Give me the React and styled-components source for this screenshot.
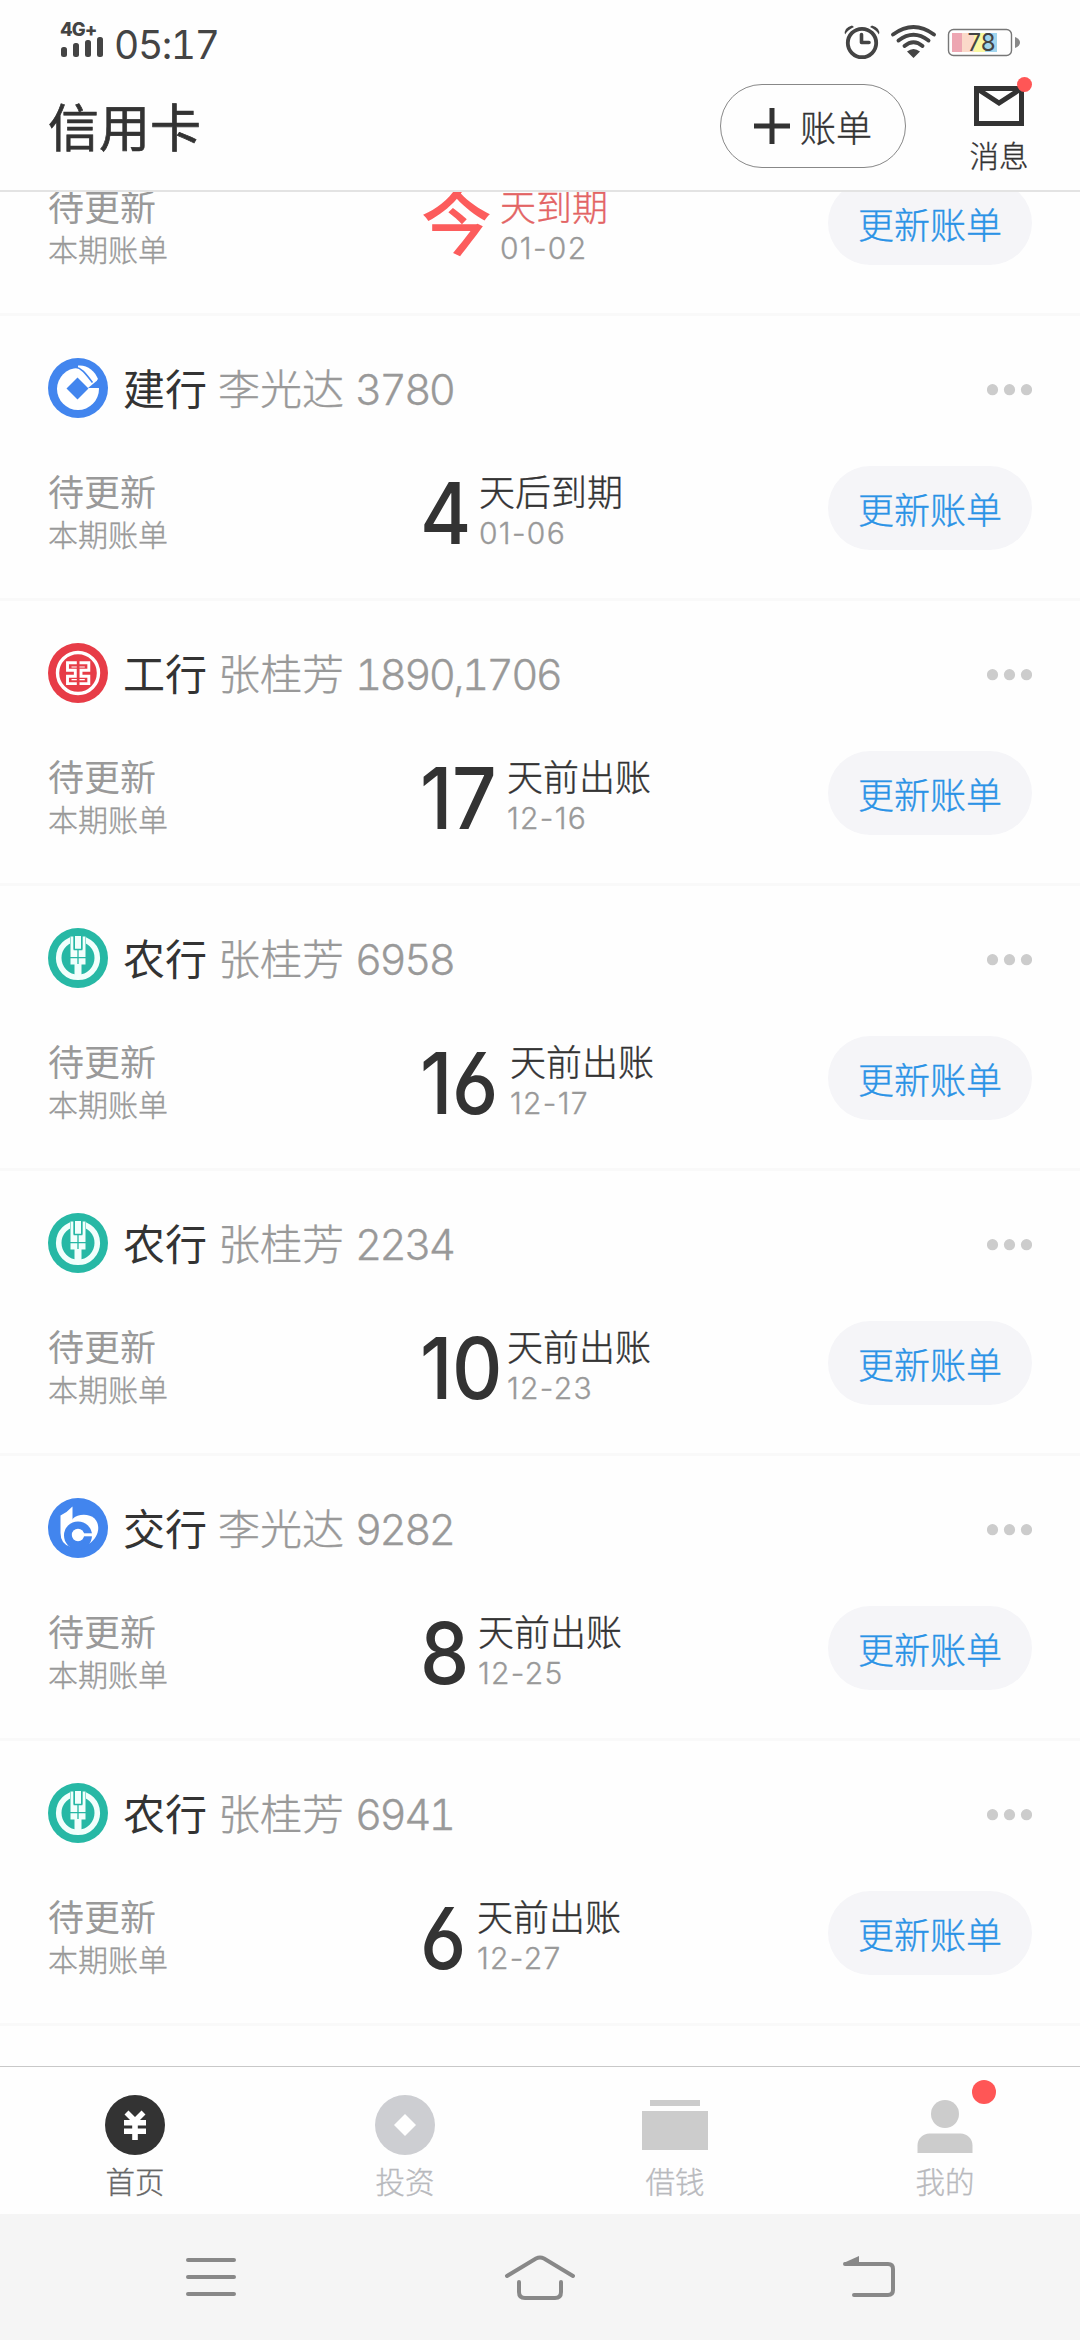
import React from 'react';
import styled, { createGlobalStyle } from 'styled-components';

const GlobalStyle = createGlobalStyle`
    * {
        box-sizing: border-box;
    }

    body {
        margin: 0;
        background: #fefefe;
        font-family: Inter, "Noto Sans CJK SC", sans-serif;
        font-weight: 300;
        color: #333;
        -webkit-text-stroke: 0.35px;
    }

    svg {
        display: block;
        flex: none;
    }
`;

const Phone = styled.div`
    width: 1080px;
    height: 2340px;
    display: flex;
    flex-direction: column;
    overflow: hidden;
    background: #fefefe;
`;

const StatusBar = styled.div`
    height: 84px;
    flex: none;
    padding: 0 60px;
    display: flex;
    align-items: flex-start;
    justify-content: space-between;
    color: #444;
    -webkit-text-stroke: 0;
`;

const StatusGroup = styled.div`
    display: flex;
    align-items: flex-start;
`;

const Signal = styled.div`
    width: 54px;
    padding-top: 17px;
`;

const Network = styled.div`
    height: 24px;
    margin-bottom: -4px;
    line-height: 24px;
    font-size: 18.5px;
    font-weight: 800;
    letter-spacing: -1px;
    white-space: nowrap;
`;

const Time = styled.div`
    margin-top: 20px;
    line-height: 50px;
    font-size: 39px;
    font-weight: 400;
    font-feature-settings: "tnum";
    letter-spacing: -1.4px;
`;

const Header = styled.header`
    height: 108px;
    flex: none;
    padding: 0 48px;
    display: flex;
    align-items: flex-start;
    border-bottom: 2px solid #e3e3e3;
`;

const Title = styled.h1`
    margin: 3px 0 0;
    flex: 1;
    font-size: 51px;
    font-weight: 400;
    line-height: 84px;
    -webkit-text-stroke: 0.7px;
`;

const AddButton = styled.button`
    width: 186px;
    height: 84px;
    padding: 0 0 0 33px;
    display: flex;
    align-items: center;
    gap: 10px;
    border: 1px solid #888;
    border-radius: 42px;
    background: none;
    color: #333;
    font: inherit;
    font-size: 36px;
`;

const Messages = styled.div`
    position: relative;
    width: 66px;
    margin-left: 60px;
    display: flex;
    flex-direction: column;
    align-items: center;
    font-size: 29.5px;
    line-height: 44px;

    svg {
        margin: 2px 0 8px;
    }
`;

const Badge = styled.i`
    position: absolute;
    top: ${props => props.$top}px;
    left: ${props => props.$left}px;
    width: ${props => props.$size}px;
    height: ${props => props.$size}px;
    border-radius: 50%;
    background: #ff5656;
`;

/* scrolled to the end, so the first card is cut by the header */
const CardList = styled.main`
    flex: 1;
    min-height: 0;
    padding-bottom: 40px;
    display: flex;
    flex-direction: column;
    justify-content: flex-end;
    overflow: hidden;
`;

const Card = styled.section`
    height: 285px;
    flex: none;
    padding: 42px 48px 0;
    border-bottom: 3px solid #f9f9f9;
`;

const CardTop = styled.div`
    height: 60px;
    display: flex;
    align-items: center;
`;

const Bank = styled.span`
    margin: 4px 0 0 15px;
    font-size: 42px;
    font-weight: 400;
    line-height: 60px;
    -webkit-text-stroke: 0;
`;

const Owner = styled.span`
    margin: 4px 0 0 11px;
    flex: 1;
    color: #999;
    font-size: 42px;
    line-height: 60px;
`;

const CardNo = styled.span`
    margin-left: 11px;
    font-feature-settings: "tnum";
    letter-spacing: -2.6px;
`;

const CardBody = styled.div`
    height: 84px;
    margin-top: 48px;
    display: flex;
`;

const Status = styled.div`
    width: 375px;
    color: #999;
`;

const StatusText = styled.div`
    margin-top: 3px;
    font-size: 36px;
    font-weight: ${props => (props.$bold ? 400 : 300)};
    line-height: 48px;
    -webkit-text-stroke: ${props => (props.$bold ? 0 : 0.35)}px;
`;

const StatusNote = styled.div`
    margin-top: -1px;
    font-size: 30px;
    line-height: 38px;
`;

const Days = styled.div`
    width: ${props => props.$width}px;
    color: ${props => (props.$due ? '#fc5c5c' : '#333')};
    font-size: ${props => (props.$due ? 71 : 85)}px;
    font-weight: 500;
    line-height: ${props => (props.$due ? 84 : 95)}px;
    font-feature-settings: "cv03";
    white-space: nowrap;
    -webkit-text-stroke: 0;

    span {
        display: inline-block;
        margin-left: ${props => (props.$due ? -2 : -3)}px;
        letter-spacing: -0.5px;
        transform: scaleX(${props => (props.$due ? 1 : 0.92)});
        transform-origin: left;
    }
`;

const When = styled.div`
    flex: 1;
    color: ${props => (props.$due ? '#e36464' : '#333')};
`;

const DateText = styled.div`
    color: #999;
    font-size: 30px;
    line-height: 32px;
    letter-spacing: 1.3px;
`;

const UpdateButton = styled.button`
    width: 204px;
    height: 84px;
    padding: 0 0 1px;
    border: 0;
    border-radius: 42px;
    background: #f5f5f8;
    color: #2b93e6;
    font: inherit;
    font-size: 36px;
`;

const TabBar = styled.nav`
    height: 148px;
    flex: none;
    display: flex;
    border-top: 1px solid #c8c8c8;
`;

const Tab = styled.div`
    position: relative;
    flex: 1;
    padding-top: 24px;
    display: flex;
    flex-direction: column;
    align-items: center;
    color: ${props => (props.$active ? '#666' : '#b8b9bd')};
    font-size: 29.5px;
    line-height: 46px;
`;

const SystemNav = styled.div`
    height: 126px;
    flex: none;
    padding: 0 184px;
    display: flex;
    align-items: center;
    justify-content: space-between;
    background: #f5f5f5;
`;

const icons = {
    home: (
        <svg width="68" height="68" viewBox="0 0 68 68">
            <circle cx="34" cy="34" r="30" fill="#333" />
            <path d="M25.5 21.5L34 30L42.5 21.5M23 31.8h22M23 40.3h22M34 28v21" fill="none" stroke="#fff" strokeWidth="5.6" />
        </svg>
    ),
    invest: (
        <svg width="68" height="68" viewBox="0 0 68 68">
            <circle cx="34" cy="34" r="30" fill="#cdced2" />
            <path d="M34 23l11 11l-11 11l-11-11z" fill="#fff" />
        </svg>
    ),
    loan: (
        <svg width="68" height="68" viewBox="0 0 68 68" fill="#ccc">
            <path d="M9 9h50v6H9zM1 20h66v39H1z" />
        </svg>
    ),
    mine: (
        <svg width="68" height="68" viewBox="0 0 68 68" fill="#ccc">
            <circle cx="34" cy="23" r="14" />
            <path d="M6.5 62V54.5a12 12 0 0 1 12-12h31a12 12 0 0 1 12 12V62z" />
        </svg>
    )
};

const logos = {
    ccb: (
        <svg width="60" height="60" viewBox="0 0 60 60">
            <circle cx="30" cy="30" r="30" fill="#4285ee" />
            <circle cx="30" cy="31" r="21" fill="#fff" />
            <path d="M30 7.5C39 6.5 47 13 50 21L43 29.5L30 10z" fill="#fff" />
            <path d="M27 9C34 10 38 16 44.5 24.5" fill="none" stroke="#4285ee" strokeWidth="1.6" />
            <path d="M40 30L51 21L60 30H50z" fill="#4285ee" />
            <path d="M29.5 19.5l11 11l-11 11l-11-11z" fill="#4285ee" />
        </svg>
    ),
    icbc: (
        <svg width="60" height="60" viewBox="0 0 60 60">
            <circle cx="30" cy="30" r="30" fill="#e73c47" />
            <circle cx="30" cy="30" r="20.5" fill="none" stroke="#fff" strokeWidth="3.4" />
            <g fill="none" stroke="#fff" strokeWidth="2.9">
                <path d="M28.8 19.8H19.5V27.2H27.3V33.2H19.5V40.6H28.8" />
                <path d="M31.5 19.8H40.8V27.2H33V33.2H40.8V40.6H31.5" />
                <path d="M23.5 24H28.8M31.5 24H36.8M23.5 36.6H28.8M31.5 36.6H36.8" strokeWidth="1.2" />
            </g>
        </svg>
    ),
    abc: (
        <svg width="60" height="60" viewBox="0 0 60 60">
            <circle cx="30" cy="30" r="30" fill="#27b8a5" />
            <circle cx="30" cy="30" r="19.3" fill="none" stroke="#f2fffc" strokeWidth="5.6" />
            <path d="M22 7h16v16H22z" fill="#27b8a5" />
            <path d="M22.5 8.5h3v13h9v-13h3v28h-4v14h-7v-14h-4z" fill="#f2fffc" />
            <path d="M27 8h6v13h-6z" fill="#f2fffc" />
            <path d="M26.3 8v13.5h7.4V8M22 29.7h16M30 22v14" fill="none" stroke="#27b8a5" strokeWidth="1.3" />
        </svg>
    ),
    bocom: (
        <svg width="60" height="60" viewBox="0 0 60 60">
            <circle cx="30" cy="30" r="30" fill="#4285ee" />
            <path d="M12.5 17.5Q19 14.5 24.5 8.5V24L17 34V41L23 49Q12.5 46.5 12.5 35z" fill="#fff" />
            <path d="M24.5 21C30 15.5 41 15.5 46.5 20.5C53.5 28 50 40 41.5 45.5L30 38L22 26z" fill="#fff" />
            <circle cx="30" cy="37.5" r="14" fill="#4285ee" />
            <circle cx="30" cy="37" r="6.2" fill="#fff" />
            <path d="M34 35.3h11v3H34z" fill="#fff" />
        </svg>
    )
};

const cards = [
    { logo: 'icbc', bank: '工行', owner: '李光达', no: '3780', days: '今', width: 77, when: '天到期', date: '01-02', due: true },
    { logo: 'ccb', bank: '建行', owner: '李光达', no: '3780', days: '4', width: 56, when: '天后到期', date: '01-06' },
    { logo: 'icbc', bank: '工行', owner: '张桂芳', no: '1890,1706', days: '17', width: 84, when: '天前出账', date: '12-16' },
    { logo: 'abc', bank: '农行', owner: '张桂芳', no: '6958', days: '16', width: 87, when: '天前出账', date: '12-17' },
    { logo: 'abc', bank: '农行', owner: '张桂芳', no: '2234', days: '10', width: 84, when: '天前出账', date: '12-23' },
    { logo: 'bocom', bank: '交行', owner: '李光达', no: '9282', days: '8', width: 55, when: '天前出账', date: '12-25' },
    { logo: 'abc', bank: '农行', owner: '张桂芳', no: '6941', days: '6', width: 54, when: '天前出账', date: '12-27' }
];

const tabs = [
    { icon: 'home', label: '首页', active: true },
    { icon: 'invest', label: '投资' },
    { icon: 'loan', label: '借钱' },
    { icon: 'mine', label: '我的', badge: true }
];

const BankCard = ({ card }) => (
    <Card>
        {/* the top row of the first card is scrolled out of view */}
        <CardTop>
            {!card.due && (
                <>
                    {logos[card.logo]}
                    <Bank>{card.bank}</Bank>
                    <Owner>{card.owner}<CardNo>{card.no}</CardNo></Owner>
                    <svg width="45" height="15" viewBox="0 0 45 15" fill="#ccc">
                        <circle cx="5.5" cy="8.7" r="5.6" />
                        <circle cx="22.5" cy="8.7" r="5.6" />
                        <circle cx="39.5" cy="8.7" r="5.6" />
                    </svg>
                </>
            )}
        </CardTop>
        <CardBody>
            <Status>
                <StatusText $bold>待更新</StatusText>
                <StatusNote>本期账单</StatusNote>
            </Status>
            <Days $width={card.width} $due={card.due}><span>{card.days}</span></Days>
            <When $due={card.due}>
                <StatusText>{card.when}</StatusText>
                <DateText>{card.date}</DateText>
            </When>
            <UpdateButton>更新账单</UpdateButton>
        </CardBody>
    </Card>
);

const App = () => (
    <Phone>
        <GlobalStyle />
        <StatusBar>
            <StatusGroup>
                <Signal>
                    <Network>4G+</Network>
                    <svg width="44" height="20" viewBox="0 0 44 20" fill="#444">
                        <rect x="1" y="10" width="6" height="10" rx="2.5" />
                        <rect x="13" y="6" width="6" height="14" rx="2.5" />
                        <rect x="25" y="3" width="6" height="17" rx="2.5" />
                        <rect x="37" y="0" width="6" height="20" rx="2.5" />
                    </svg>
                </Signal>
                <Time>05:17</Time>
            </StatusGroup>
            <svg width="180" height="84" viewBox="840 0 180 84" fill="none" stroke="#444">
                <circle cx="862" cy="43" r="14.2" strokeWidth="3.8" />
                <path d="M861.5 34.5V42.5H869" strokeWidth="3.6" strokeLinecap="round" strokeLinejoin="round" />
                <path d="M845 34.5Q843.5 28 852 25.5L854 27Q848 29.5 845 34.5zM879 34.5Q880.5 28 872 25.5L870 27Q876 29.5 879 34.5z" fill="#444" stroke="none" />
                <path d="M893 34.5Q913.5 19.5 934 34.5M898.5 40.5Q913.5 29 928.5 40.5M904.5 46Q913.5 38.5 922.5 46" strokeWidth="3.9" strokeLinecap="round" />
                <path d="M907 51.5Q913.5 46.5 920 51.5L913.5 58z" fill="#444" stroke="none" />
                <g stroke="none">
                    <path d="M952 33h10v19h-10z" fill="#eda6b2" />
                    <path d="M962 33h12v19h-12z" fill="#fbd9c9" />
                    <path d="M974 33h11v19h-11z" fill="#faf8a1" />
                    <path d="M985 33h12v19h-12z" fill="#a0d5ee" />
                    <path d="M1015 37Q1020 39 1020 42.5Q1020 46 1015 48z" fill="#888" />
                </g>
                <rect x="948.5" y="29.5" width="63" height="26" rx="5" stroke="#777" strokeWidth="1.4" />
                <text x="967.5" y="51" fill="#444" stroke="none" fontSize="24" fontWeight="400">78</text>
            </svg>
        </StatusBar>
        <Header>
            <Title>信用卡</Title>
            <AddButton>
                <svg width="36" height="36" viewBox="0 0 36 36" stroke="#333" strokeWidth="5">
                    <path d="M18 0v36M0 18h36" />
                </svg>
                账单
            </AddButton>
            <Messages>
                <svg width="50" height="40" viewBox="0 0 50 40" fill="none" stroke="#333" strokeWidth="5">
                    <path d="M2.5 2.5h45v35h-45z" />
                    <path d="M5 4L25 17L45 4" />
                </svg>
                消息
                <Badge $top={-7} $left={51} $size={15} />
            </Messages>
        </Header>
        <CardList>
            {cards.map(card => <BankCard key={card.date} card={card} />)}
        </CardList>
        <TabBar>
            {tabs.map(tab => (
                <Tab key={tab.icon} $active={tab.active}>
                    {icons[tab.icon]}
                    {tab.label}
                    {tab.badge && <Badge $top={13} $left={162} $size={24} />}
                </Tab>
            ))}
        </TabBar>
        <SystemNav>
            <svg width="54" height="42" viewBox="0 0 54 42" stroke="#888" strokeWidth="4" strokeLinecap="round">
                <path d="M4 4h46M4 21h46M4 38h46" />
            </svg>
            <svg width="72" height="46" viewBox="0 0 72 46" fill="none" stroke="#888" strokeWidth="4" strokeLinecap="round">
                <path d="M3 22L32 4.5Q36 2.5 40 4.5L69 22M15 28v10q0 6 6 6h30q6 0 6-6V28" />
            </svg>
            <svg width="54" height="42" viewBox="0 0 54 42" fill="none" stroke="#888" strokeWidth="4" strokeLinecap="round">
                <path d="M3 8h43q5 0 5 5v21q0 5-5 5H12" />
                <path d="M1.5 7L17 0v8z" fill="#888" stroke="none" />
            </svg>
        </SystemNav>
    </Phone>
);

export default App;
